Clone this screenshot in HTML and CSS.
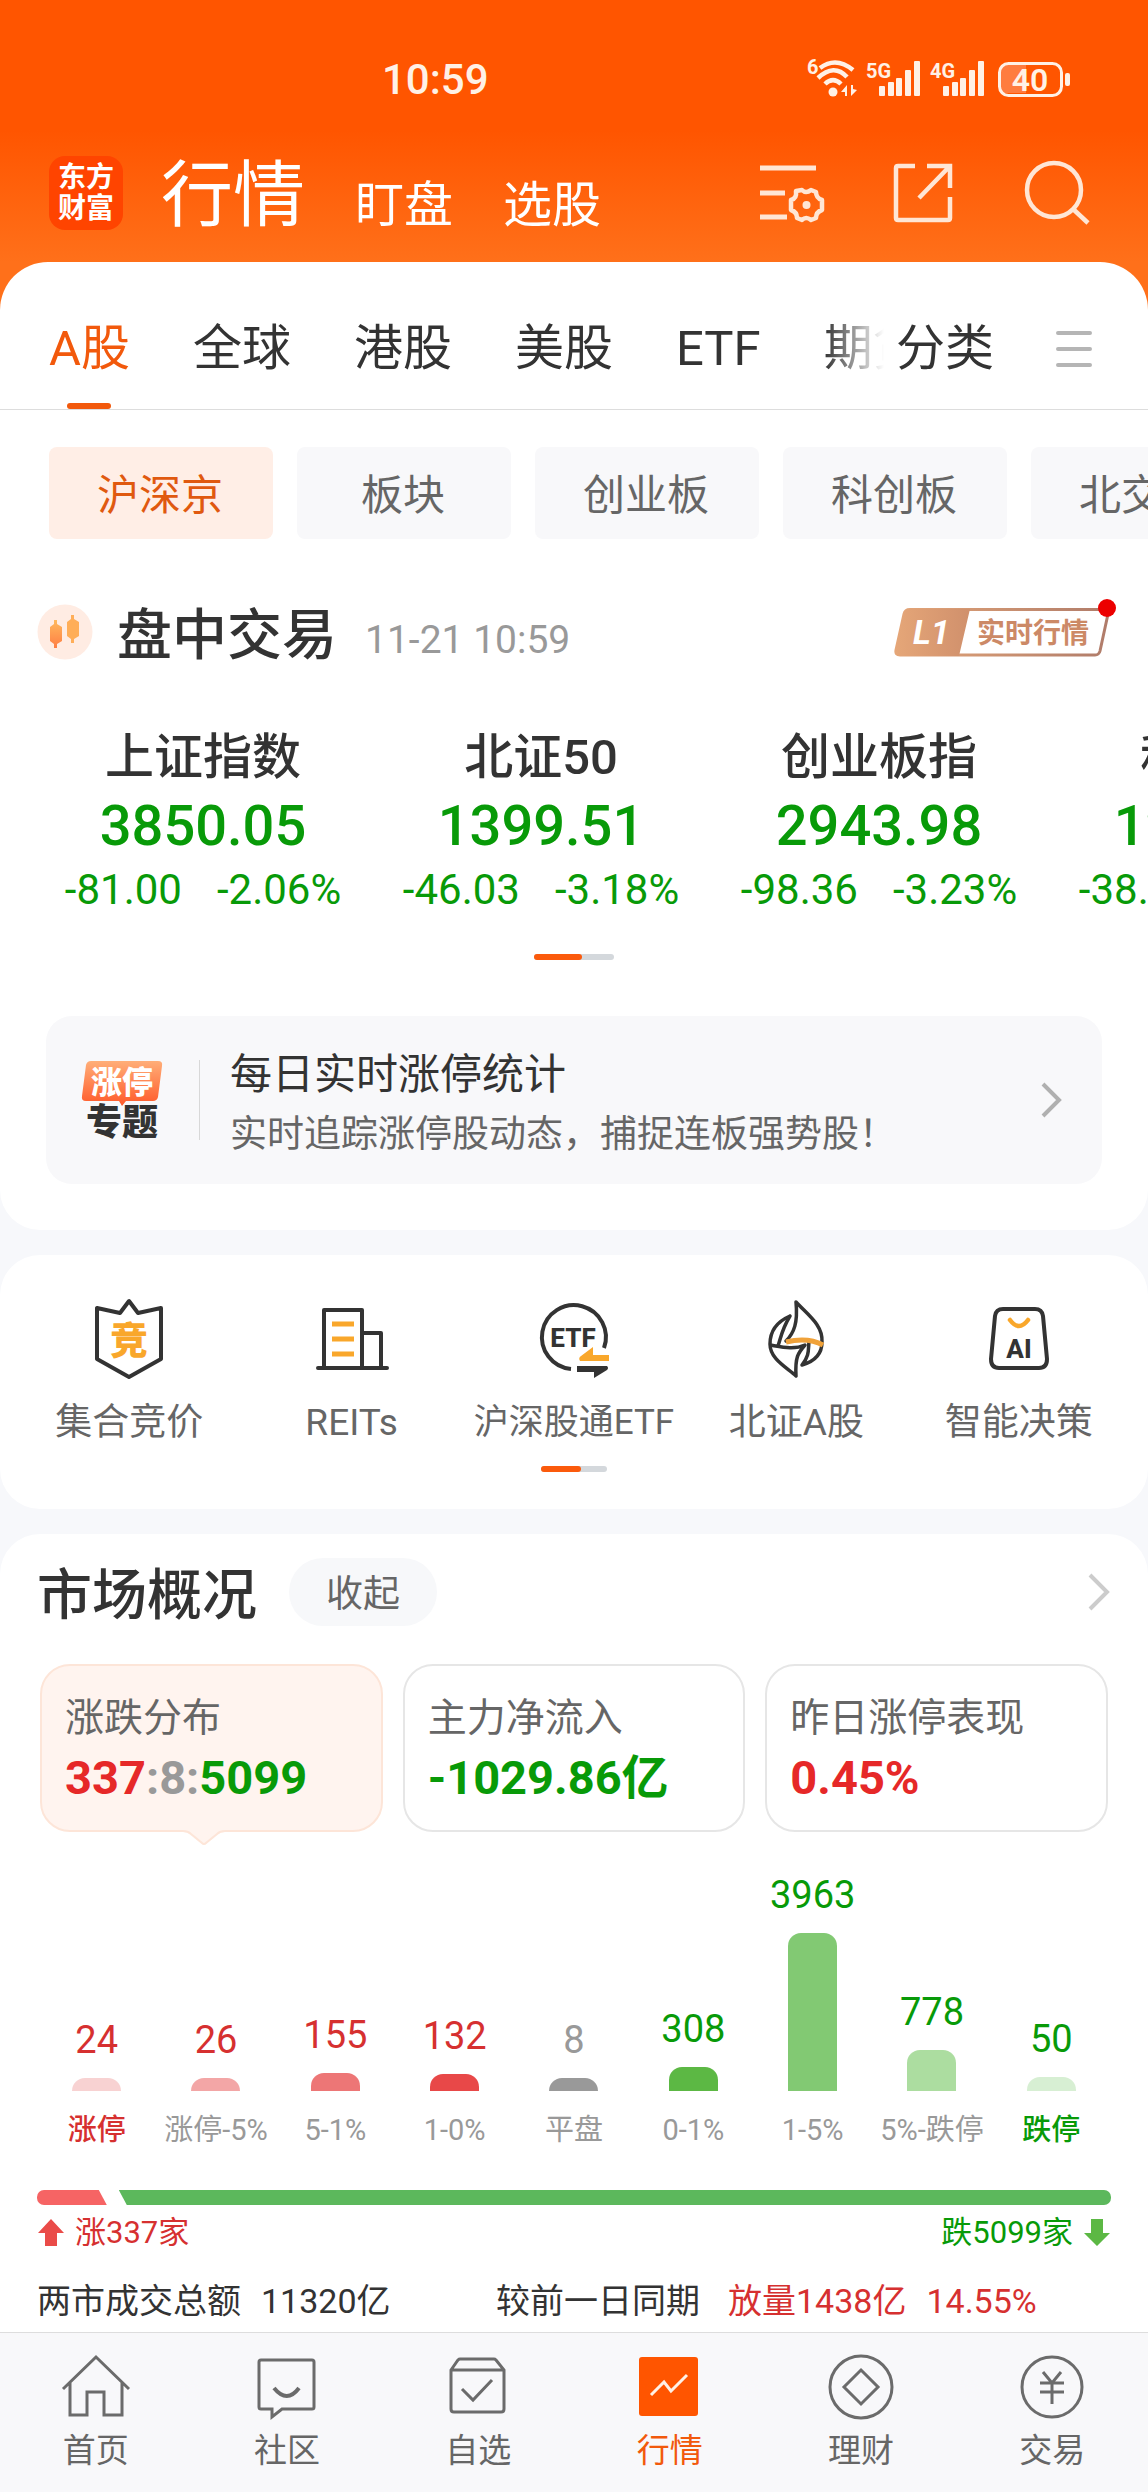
FILE: index.html
```html
<!DOCTYPE html>
<html lang="zh-CN">
<head>
<meta charset="utf-8">
<meta name="viewport" content="width=device-width, initial-scale=1">
<title>行情</title>
<link rel="stylesheet" href="styles.css">
</head>
<body>
<header class="header">
  <div class="status">
    <span class="status-time">10:59</span>
    <svg class="status-icons" width="266" height="44" viewBox="0 0 266 44" fill="#fff1e6" aria-hidden="true">
      <text x="0" y="17" font-size="20" font-weight="700">6</text>
      <g fill="none" stroke="#fff1e6" stroke-width="4.5">
        <path d="M13 11Q29 -1 46 13"/>
        <path d="M11 21Q27 6 40 20"/>
        <path d="M18 27Q26 19 34 27"/>
      </g>
      <circle cx="26" cy="35" r="4.5"/>
      <path d="M34 35l6-7v11h-2v-4zM50 33l-6 6V28h2v4z"/>
      <text x="59" y="21" font-size="20" font-weight="700">5G</text>
      <rect x="72" y="29" width="6" height="10" rx="1"/><rect x="81" y="25" width="6" height="14" rx="1"/><rect x="89" y="21" width="6" height="18" rx="1"/><rect x="98" y="13" width="6" height="26" rx="1"/><rect x="107" y="4" width="6" height="35" rx="1"/>
      <text x="123" y="21" font-size="20" font-weight="700">4G</text>
      <rect x="136" y="29" width="6" height="10" rx="1"/><rect x="145" y="25" width="6" height="14" rx="1"/><rect x="153" y="21" width="6" height="18" rx="1"/><rect x="162" y="13" width="6" height="26" rx="1"/><rect x="171" y="4" width="6" height="35" rx="1"/>
      <path d="M194 8h25v28h-25z" fill="#ff7c3f"/>
      <rect x="192.500" y="6.500" width="62" height="32" rx="9" fill="none" stroke="#fff1e6" stroke-width="3"/>
      <rect x="258" y="16" width="5" height="13" rx="2"/>
      <text x="223" y="34" font-size="32" font-weight="600" text-anchor="middle">40</text>
    </svg>
  </div>
  <nav class="nav">
    <a class="logo" href="#"><span>东方</span><span>财富</span></a>
    <div class="nav-titles">
      <a class="nav-main" href="#">行情</a>
      <a class="nav-item" href="#">盯盘</a>
      <a class="nav-item" href="#">选股</a>
    </div>
    <div class="nav-actions">
      <button type="button" aria-label="设置">
        <svg width="66" height="66" viewBox="0 0 66 66" fill="none" stroke="#ffe6d5" stroke-width="5">
          <path d="M0 8H56M0 33H25M0 57H27"/>
          <path stroke-width="4.500" stroke-linejoin="round" d="M36 31 42 30Q46 34 51 30L56 32Q56 38 62 40V50Q56 52 56 58L51 60Q46 56 42 60L37 58Q37 52 31 50V40Q37 38 36 32Z"/>
          <circle cx="46.500" cy="45" r="4" fill="#ffe6d5" stroke="none"/>
        </svg>
      </button>
      <button type="button" aria-label="分享">
        <svg width="66" height="66" viewBox="0 0 66 66" fill="none" stroke="#ffe6d5" stroke-width="4.500">
          <path d="M23 6H6Q4 6 4 8V58Q4 60 6 60H56Q58 60 58 58V37M35 6H58V28M57 7 27 38"/>
        </svg>
      </button>
      <button type="button" aria-label="搜索">
        <svg width="66" height="66" viewBox="0 0 66 66" fill="none" stroke="#ffe6d5" stroke-width="4.500">
          <circle cx="30" cy="30" r="27"/><path d="M49 49 64 63"/>
        </svg>
      </button>
    </div>
  </nav>
</header>

<main class="main">
  <section class="sheet sheet-top">
    <nav class="markets">
      <div class="markets-scroll">
        <a class="market market-on" href="#">A股</a>
        <a class="market" href="#">全球</a>
        <a class="market" href="#">港股</a>
        <a class="market" href="#">美股</a>
        <a class="market" href="#">ETF</a>
        <a class="market" href="#">期货</a>
      </div>
      <button class="market-all" type="button">分类
        <svg width="38" height="38" viewBox="0 0 38 38" stroke="#b5b5b5" stroke-width="4" stroke-linecap="round" aria-hidden="true"><path d="M3 3H35M3 19H35M3 35H35"/></svg>
      </button>
    </nav>
    <div class="chips">
      <button class="chip chip-on" type="button">沪深京</button>
      <button class="chip" type="button">板块</button>
      <button class="chip" type="button">创业板</button>
      <button class="chip" type="button">科创板</button>
      <button class="chip" type="button">北交所</button>
    </div>
    <div class="session">
      <svg width="56" height="56" viewBox="0 0 56 56" aria-hidden="true">
        <defs><linearGradient id="candle" x2="0" y2="1"><stop stop-color="#ffb95c"/><stop offset="1" stop-color="#ff7e45"/></linearGradient></defs>
        <circle cx="28" cy="28" r="27.500" fill="#ffece3"/>
        <path fill="url(#candle)" d="M17 16h3v4l5 3v14l-5 3v4h-3v-4l-4-3V23l4-3z"/>
        <path fill="#ffae58" d="M34 11h3v4l5 3v14l-5 3v4h-3v-4l-4-3V18l4-3z"/>
      </svg>
      <h2 class="title">盘中交易</h2>
      <time class="session-time">11-21 10:59</time>
      <a class="level" href="#" aria-label="L1 实时行情">
        <svg width="224" height="62" viewBox="0 0 224 62" aria-hidden="true">
          <defs><linearGradient id="bronze"><stop stop-color="#e5a678"/><stop offset="1" stop-color="#b07c6a"/></linearGradient><linearGradient id="bronze-tag"><stop stop-color="#e5a678"/><stop offset="1" stop-color="#d0906c"/></linearGradient></defs>
          <path d="M17 11.500H211Q216 11.500 215 16L207 53Q206 57 202 57H7Q2 57 3 52L11 16Q12 11.500 17 11.500Z" fill="#fff" stroke="url(#bronze)" stroke-width="3"/>
          <path d="M17 11H77L66 58H7Q2 57 3 52L11 16Q12 11 17 11Z" fill="url(#bronze-tag)"/>
          <text x="20" y="46" font-size="34" font-weight="700" font-style="italic" fill="#fff">L1</text>
          <text x="84" y="45" font-size="28" font-weight="700" fill="#cc8966">实时行情</text>
          <circle cx="214" cy="10" r="9" fill="#ec0000"/>
        </svg>
      </a>
    </div>
    <div class="indices">
      <a class="index" href="#"><span class="index-name">上证指数</span><span class="index-value">3850.05</span><span class="index-change"><span>-81.00</span><span>-2.06%</span></span></a>
      <a class="index" href="#"><span class="index-name">北证50</span><span class="index-value">1399.51</span><span class="index-change"><span>-46.03</span><span>-3.18%</span></span></a>
      <a class="index" href="#"><span class="index-name">创业板指</span><span class="index-value">2943.98</span><span class="index-change"><span>-98.36</span><span>-3.23%</span></span></a>
      <a class="index" href="#"><span class="index-name">科创50</span><span class="index-value">1285.83</span><span class="index-change"><span>-38.17</span><span>-2.88%</span></span></a>
    </div>
    <div class="pager pager-indices"><i></i></div>
    <a class="banner" href="#">
      <svg class="banner-icon" width="84" height="80" viewBox="0 0 84 80" aria-hidden="true">
        <defs><linearGradient id="flame" x2="0" y2="1"><stop stop-color="#ffae78"/><stop offset="1" stop-color="#ff5a2a"/></linearGradient></defs>
        <path fill="url(#flame)" d="M10 1H77Q82 1 81 6L77 37Q76 41 72 41H45L41 46L38 41H5Q0 41 1 36L5 5Q6 1 10 1Z"/>
        <text x="41" y="33" font-size="31" font-weight="900" text-anchor="middle" fill="#fff">涨停</text>
        <text x="41" y="75" font-size="36" font-weight="900" text-anchor="middle" fill="#333">专题</text>
      </svg>
      <span class="banner-text"><strong>每日实时涨停统计</strong><span>实时追踪涨停股动态，捕捉连板强势股！</span></span>
      <svg width="22" height="36" viewBox="0 0 22 36" fill="none" stroke="#b0b0b0" stroke-width="4" aria-hidden="true"><path d="M3 2 19 18 3 34"/></svg>
    </a>
  </section>

  <section class="sheet tools">
    <div class="tool-list">
      <a class="tool" href="#">
        <svg width="80" height="84" viewBox="0 0 80 84" fill="none" stroke="#333" stroke-width="4" stroke-linejoin="round" aria-hidden="true">
          <path d="M40 4 31 16 8 11V62L40 80 72 62V11L49 16Z"/>
          <text x="40" y="57" font-size="38" font-weight="900" text-anchor="middle" fill="#f9a72b" stroke="none">竞</text>
        </svg><span>集合竞价</span></a>
      <a class="tool" href="#">
        <svg width="80" height="84" viewBox="0 0 80 84" fill="none" stroke="#333" stroke-width="4" stroke-linejoin="round" stroke-linecap="round" aria-hidden="true">
          <path d="M6 71H75M12 70V13H50V70M50 36H69V70"/>
          <path stroke="#f9a72b" stroke-width="5" stroke-linecap="butt" d="M20 27H42M20 42H42M20 57H42"/>
        </svg><span>REITs</span></a>
      <a class="tool tool-long" href="#">
        <svg width="80" height="84" viewBox="0 0 80 84" fill="none" stroke="#333" stroke-width="4" aria-hidden="true">
          <path d="M70 51A32 32 0 1 0 37 72"/>
          <text x="39" y="50" font-size="26" font-weight="800" text-anchor="middle" fill="#333" stroke="none">ETF</text>
          <path fill="#f9a72b" stroke="none" d="M46 64Q44 61 47 59L59 50V58H75V64Z"/>
          <path fill="#333" stroke="none" d="M43 69H73Q75 71 73 73L60 81V75H43Z"/>
        </svg><span>沪深股通ETF</span></a>
      <a class="tool" href="#">
        <svg width="80" height="84" viewBox="0 0 80 84" fill="none" stroke="#333" stroke-width="3.500" stroke-linejoin="round" stroke-linecap="round" aria-hidden="true">
          <path d="M40 5C52 18 67 28 66 45M40 5C42 26 38 36 30 44M34 19C18 26 14 38 14 47C14 62 30 70 40 79C39 60 42 56 49 48C38 53 26 50 14 48M34 19C26 32 25 40 22 49M66 45C66 56 60 64 46 68C54 58 52 52 53 45"/>
          <path stroke="#f0a23a" stroke-width="5" stroke-linecap="butt" d="M30 45C42 42 56 42 67 48"/>
        </svg><span>北证A股</span></a>
      <a class="tool" href="#">
        <svg width="80" height="84" viewBox="0 0 80 84" fill="none" stroke="#333" stroke-width="4" aria-hidden="true">
          <path d="M24 12H56Q63 12 64 19L68 62Q68 71 60 71H20Q12 71 12 62L16 19Q17 12 24 12Z"/>
          <path stroke="#f9a72b" stroke-width="4.500" stroke-linecap="round" d="M31 23Q40 35 49 23"/>
          <text x="40" y="61" font-size="26" font-weight="800" text-anchor="middle" fill="#333" stroke="none">AI</text>
        </svg><span>智能决策</span></a>
    </div>
    <div class="pager pager-tools"><i></i></div>
  </section>

  <section class="sheet overview">
    <div class="overview-head">
      <h2 class="title">市场概况</h2>
      <button class="fold" type="button">收起</button>
      <a class="more" href="#" aria-label="更多"><svg width="24" height="40" viewBox="0 0 24 40" fill="none" stroke="#ccc" stroke-width="4" aria-hidden="true"><path d="M3 3 20 20 3 37"/></svg></a>
    </div>
    <div class="stats">
      <button class="stat stat-on" type="button"><span class="stat-label">涨跌分布</span><span class="stat-value"><span class="up">337</span><span class="flat">:8:</span><span class="down">5099</span></span>
        <svg class="stat-pointer" width="42" height="16" viewBox="0 0 42 16" aria-hidden="true"><path d="M0 0H42V2Q38 2 35 4L23 14Q21 16 19 14L7 4Q4 2 0 2Z" fill="#fff4ef"/><path d="M0 1Q5 1 8 4L19 13Q21 15 23 13L34 4Q37 1 42 1" fill="none" stroke="#fde5d8" stroke-width="2"/></svg>
      </button>
      <button class="stat" type="button"><span class="stat-label">主力净流入</span><span class="stat-value down">-1029.86亿</span></button>
      <button class="stat" type="button"><span class="stat-label">昨日涨停表现</span><span class="stat-value up">0.45%</span></button>
    </div>
    <div class="chart">
      <div class="bar"><span class="bar-value up">24</span><i class="b1" style="height:13px"></i><span class="bar-label up-strong">涨停</span></div>
      <div class="bar"><span class="bar-value up">26</span><i class="b2" style="height:13px"></i><span class="bar-label">涨停-5%</span></div>
      <div class="bar"><span class="bar-value up">155</span><i class="b3" style="height:18px"></i><span class="bar-label">5-1%</span></div>
      <div class="bar"><span class="bar-value up">132</span><i class="b4" style="height:17px"></i><span class="bar-label">1-0%</span></div>
      <div class="bar"><span class="bar-value flat">8</span><i class="b5" style="height:13px"></i><span class="bar-label">平盘</span></div>
      <div class="bar"><span class="bar-value down">308</span><i class="b6" style="height:24px"></i><span class="bar-label">0-1%</span></div>
      <div class="bar"><span class="bar-value down">3963</span><i class="b7" style="height:158px"></i><span class="bar-label">1-5%</span></div>
      <div class="bar"><span class="bar-value down">778</span><i class="b8" style="height:41px"></i><span class="bar-label">5%-跌停</span></div>
      <div class="bar"><span class="bar-value down">50</span><i class="b9" style="height:14px"></i><span class="bar-label down-strong">跌停</span></div>
    </div>
    <div class="ratio"><i class="ratio-up" style="width:6.5%"></i><i class="ratio-down"></i></div>
    <div class="ratio-legend">
      <span class="up"><svg width="28" height="28" viewBox="0 0 28 28" fill="#ea4b48" aria-hidden="true"><path d="M14 0 27 14H20V27H8V14H1Z"/></svg>涨337家</span>
      <span class="down">跌5099家<svg width="28" height="28" viewBox="0 0 28 28" fill="#5cb844" aria-hidden="true"><path d="M14 27 1 14H8V0H20V14H27Z"/></svg></span>
    </div>
    <div class="turnover">
      <span class="turnover-total"><span>两市成交总额</span><span>11320亿</span></span>
      <span>较前一日同期</span>
      <span class="turnover-diff up"><span>放量1438亿</span><span>14.55%</span></span>
    </div>
  </section>
</main>

<nav class="tabbar">
  <a class="tab" href="#"><svg width="72" height="72" viewBox="0 0 72 72" aria-hidden="true"><path d="M3 38 36 6 69 38M10 32V64H27V41H44V64H62V32"/></svg>首页</a>
  <a class="tab" href="#"><svg width="72" height="72" viewBox="0 0 72 72" aria-hidden="true"><path d="M10 9H61Q63 9 63 11V56Q63 58 61 58H31L21 66V58H10Q8 58 8 56V11Q8 9 10 9Z"/><path d="M23 37Q36 53 48 37" stroke-width="4"/></svg>社区</a>
  <a class="tab" href="#"><svg width="72" height="72" viewBox="0 0 72 72" aria-hidden="true"><path d="M9 19 16 9Q17 8 18 8H52Q53 8 54 9L62 19V58Q62 61 59 61H12Q9 61 9 58ZM9 19H62M20 38 31 49 50 29"/></svg>自选</a>
  <a class="tab tab-on" href="#"><svg width="72" height="72" viewBox="0 0 72 72" aria-hidden="true"><rect x="5" y="6" width="59" height="59" rx="3" fill="#ff5500" stroke="none"/><path d="M17 44 30 31 37 40 53 24" stroke="#fff1e6"/></svg>行情</a>
  <a class="tab" href="#"><svg width="72" height="72" viewBox="0 0 72 72" aria-hidden="true"><circle cx="36" cy="36" r="31"/><path d="M36 19 53 36 36 53 19 36Z"/></svg>理财</a>
  <a class="tab" href="#"><svg width="72" height="72" viewBox="0 0 72 72" aria-hidden="true"><circle cx="36" cy="36" r="30"/><path d="M27 21 36 32 45 21M24 32H48M24 41H48M36 32V53"/></svg>交易</a>
</nav>
</body>
</html>
```

FILE: styles.css
```css
* { box-sizing: border-box; }

body {
  margin: 0;
  min-height: 100vh;
  display: flex;
  flex-direction: column;
  overflow-x: hidden;
  background: #f7f8fb;
  color: #333;
  font-family: Roboto, "Noto Sans CJK SC", sans-serif;
}

a { color: inherit; text-decoration: none; }
button { margin: 0; padding: 0; border: 0; background: none; color: inherit; font: inherit; }
h2 { margin: 0; }
svg { display: block; flex: none; }

.up { color: #d63030; }
.down { color: #089a08; }
.flat { color: #999; }

/* Header */
.header {
  padding: 55px 58px 80px 49px;
  background: linear-gradient(#ff5500 0, #ff5500 130px, #ff701a 262px);
  color: #fff;
}
.status { display: flex; align-items: center; justify-content: space-between; height: 48px; padding: 0 17px 0 333px; }
.status-time { font-size: 42px; font-weight: 500; color: #fff1e6; }
.nav { display: flex; align-items: center; height: 74px; margin-top: 53px; }
.logo {
  display: flex;
  flex-direction: column;
  justify-content: center;
  align-items: center;
  width: 74px;
  height: 74px;
  border-radius: 16px;
  background: #ff4400;
  font-size: 28px;
  font-weight: 700;
  line-height: 31px;
}
.nav-titles { display: flex; align-items: flex-start; gap: 50px; height: 74px; margin-left: 38px; }
.nav-main { font-size: 72px; line-height: 80px; }
.nav-item { font-size: 49px; line-height: 100px; }
.nav-actions { display: flex; gap: 66px; margin-left: auto; }

/* Cards */
.main { flex: 1; display: flex; flex-direction: column; gap: 25px; }
.sheet { background: #fff; border-radius: 40px; }
.sheet-top { margin-top: -48px; padding-bottom: 46px; border-radius: 48px 48px 40px 40px; overflow: hidden; }
.title { padding-top: 6px; font-size: 55px; font-weight: 500; line-height: 56px; }

.markets { display: flex; height: 148px; padding: 26px 55px 0 49px; border-bottom: 1px solid #ddd; font-size: 49px; line-height: 121px; }
.markets-scroll {
  display: flex;
  flex: 1;
  gap: 63px;
  min-width: 0;
  margin-right: 12px;
  overflow: hidden;
  white-space: nowrap;
  -webkit-mask-image: linear-gradient(90deg, #000 calc(100% - 60px), transparent);
  mask-image: linear-gradient(90deg, #000 calc(100% - 60px), transparent);
}
.market { position: relative; flex: none; }
.market-on { color: #f2590c; }
.market-on::after {
  content: "";
  position: absolute;
  left: 50%;
  bottom: 0;
  width: 44px;
  height: 6px;
  margin-left: -22px;
  border-radius: 3px;
  background: #f2590c;
}
.market-all { display: flex; align-items: center; gap: 61px; }

.chips { display: flex; gap: 24px; padding: 37px 0 0 49px; overflow: hidden; }
.chip { flex: none; min-width: 214px; height: 92px; padding: 0 50px 4px 48px; border-radius: 8px; background: #f8f8fa; color: #666; font-size: 42px; }
.chip-on { background: #ffeee6; color: #e0590f; }

.session { display: flex; align-items: center; height: 56px; margin-top: 65px; padding: 0 31px 0 37px; }
.session .title { margin-left: 24px; }
.session-time { margin-left: 28px; padding-top: 16px; color: #999; font-size: 39px; line-height: 46px; }
.level { margin-left: auto; padding-bottom: 6px; }

.indices { display: flex; margin-top: 68px; padding-left: 34px; overflow: hidden; }
.index { display: flex; flex-direction: column; flex: 0 0 338px; align-items: center; color: #089a08; }
.index-name { color: #333; font-size: 49px; font-weight: 500; line-height: 60px; }
.index-value { font-size: 56px; font-weight: 500; line-height: 76px; }
.index-change { display: flex; gap: 35px; font-size: 42px; line-height: 52px; }

.pager { width: 80px; height: 6px; margin: 38px auto 0; border-radius: 3px; background: #d4d8dc; }
.pager i { display: block; width: 60%; height: 6px; border-radius: 3px; background: #fb5a0c; }
.pager-tools { width: 66px; margin-top: 22px; }

.banner { display: flex; align-items: center; height: 168px; margin: 56px 46px 0; padding: 0 40px 0 35px; border-radius: 26px; background: #f8f8fa; }
.banner-text { display: flex; flex: 1; flex-direction: column; gap: 2px; position: relative; margin-left: 34px; padding: 10px 0 0 31px; }
.banner-text::before { content: ""; position: absolute; left: 0; top: 24px; bottom: 24px; width: 1px; background: #d8d8d8; }
.banner-text strong { font-size: 42px; font-weight: 400; line-height: 58px; }
.banner-text span { color: #666; font-size: 37px; line-height: 58px; }

.tools { padding: 42px 18px 37px; }
.tool-list { display: grid; grid-template-columns: repeat(5, 1fr); }
.tool { display: flex; flex-direction: column; align-items: center; gap: 20px; color: #666; font-size: 37px; line-height: 44px; white-space: nowrap; }
.tool-long { font-size: 35px; }
.tools .pager-tools { margin-top: 21px; }

/* Market overview */
.overview { padding: 24px 37px 9px; border-radius: 40px 40px 0 0; }
.overview-head { display: flex; align-items: center; height: 68px; }
.fold { width: 148px; height: 68px; margin-left: 32px; padding-bottom: 2px; border-radius: 34px; background: #f7f8fa; color: #666; font-size: 37px; }
.more { margin-left: auto; }
.stats { display: grid; grid-template-columns: repeat(3, 1fr); gap: 20px; margin: 38px 3px 0; }
.stat { position: relative; display: flex; flex-direction: column; align-items: flex-start; height: 168px; padding: 25px 23px 0; border: 2px solid #e6e6e6; border-radius: 30px; text-align: left; }
.stat-on { border-color: #fde5d8; background: #fff4ef; }
.stat-label { color: #666; font-size: 39px; line-height: 54px; }
.stat-value { font-size: 47px; font-weight: 700; line-height: 66px; }
.stat .up { color: #e62828; }
.stat-pointer { position: absolute; left: 50%; top: 100%; margin-left: -28px; }

.chart { display: grid; grid-template-columns: repeat(9, 1fr); align-items: end; height: 316px; }
.bar { display: flex; flex-direction: column; align-items: center; white-space: nowrap; }
.bar-value { margin-bottom: 14px; font-size: 38px; line-height: 48px; }
.bar i { width: 49px; border-radius: 13px 13px 0 0; }
.bar-label { margin-top: 21px; color: #999; font-size: 29px; line-height: 36px; }
.bar-label.up-strong { color: #d63030; font-weight: 500; }
.bar-label.down-strong { color: #089a08; font-weight: 500; }
.b1 { background: #f8d2d2; }
.b2 { background: #f3a6a6; }
.b3 { background: #ed7676; }
.b4 { background: #e84848; }
.b5 { background: #999; }
.b6 { background: #5cb844; }
.b7 { background: #82c973; }
.b8 { background: #acdda0; }
.b9 { background: #d7efd3; }

.ratio { display: flex; gap: 12px; height: 15px; margin-top: 42px; border-radius: 7px; overflow: hidden; }
.ratio-up { background: #f66464; clip-path: polygon(0 0, calc(100% - 8px) 0, 100% 100%, 0 100%); }
.ratio-down { flex: 1; background: #5cb85c; clip-path: polygon(0 0, 100% 0, 100% 100%, 8px 100%); }
.ratio-legend { display: flex; justify-content: space-between; margin-top: 8px; font-size: 31px; line-height: 40px; }
.ratio-legend span { display: flex; align-items: center; gap: 10px; }
.turnover { display: flex; margin-top: 26px; font-size: 34px; line-height: 44px; white-space: nowrap; }
.turnover > span { display: flex; gap: 20px; }
.turnover-total { width: 459px; }
.turnover-diff { margin-left: 28px; }

/* Bottom navigation */
.tabbar { position: sticky; bottom: 0; display: grid; grid-template-columns: repeat(6, 1fr); height: 160px; padding-top: 18px; border-top: 1px solid #ddd; background: #f8f8fa; }
.tab { display: flex; flex-direction: column; align-items: center; gap: 6px; color: #666; font-size: 33px; line-height: 44px; }
.tab svg { fill: none; stroke: #6b6b6b; stroke-width: 3; }
.tab-on { color: #f2590c; }
```
